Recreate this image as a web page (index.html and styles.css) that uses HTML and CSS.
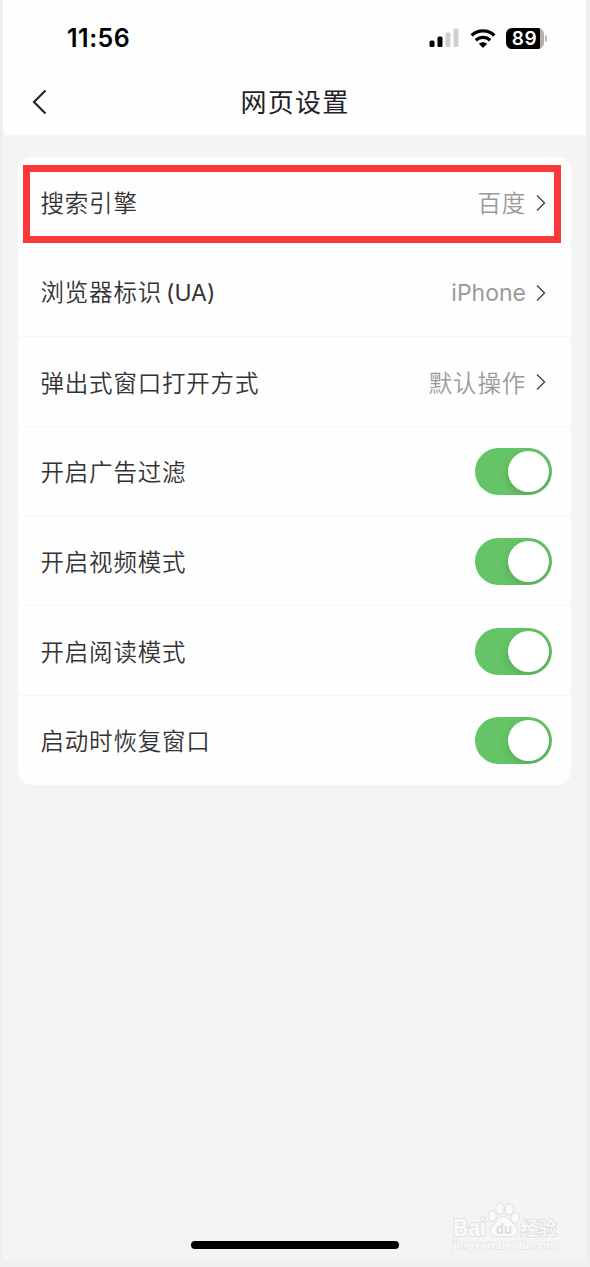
FILE: index.html
```html
<!DOCTYPE html>
<html lang="zh-CN">
<head>
    <meta charset="UTF-8">
    <title>网页设置</title>
    <link rel="stylesheet" href="styles.css">
</head>
<body>
    <div class="phone">
        <header class="header">
            <div class="status-bar">
                <span class="time">11:56</span>
                <div class="status-icons">
                    <svg class="signal" width="30" height="20" viewBox="0 0 30 20">
                        <rect x="0.5" y="12.5" width="5" height="6.5" rx="1.5"/>
                        <rect x="8.5" y="8.5" width="5" height="10.5" rx="1.5"/>
                        <rect class="dim" x="16.5" y="4.5" width="5" height="14.5" rx="1.5"/>
                        <rect class="dim" x="24.5" y="0.5" width="5" height="18.5" rx="1.5"/>
                    </svg>
                    <svg class="wifi" width="26" height="19" viewBox="0 0 26 19">
                        <path d="M1.7 6.5C8 .4 18 .4 24.3 6.5M5.8 11.2c4.1-3.9 10.3-3.9 14.4 0" fill="none" stroke="#000" stroke-width="3.3"/>
                        <path d="M13 19l-4.2-4.2c2.3-2.2 6.1-2.2 8.4 0z"/>
                    </svg>
                    <div class="battery"><span>89</span></div>
                    <div class="battery-cap"></div>
                </div>
            </div>
            <div class="nav-bar">
                <svg class="back" width="18" height="28" viewBox="0 0 18 28">
                    <path d="M15.5 2.5L4 14l11.5 11.5" fill="none" stroke="#24242a" stroke-width="2.2"/>
                </svg>
                <h1>网页设置</h1>
            </div>
        </header>

        <main class="card">
            <div class="row">
                <span class="label">搜索引擎</span>
                <span class="value">百度</span>
                <svg class="arrow" viewBox="0 0 10 18"><path d="M1 1.5L8.5 9 1 16.5"/></svg>
                <div class="highlight"></div>
            </div>
            <div class="row">
                <span class="label">浏览器标识<span class="latin">(UA)</span></span>
                <span class="value latin">iPhone</span>
                <svg class="arrow" viewBox="0 0 10 18"><path d="M1 1.5L8.5 9 1 16.5"/></svg>
            </div>
            <div class="row">
                <span class="label">弹出式窗口打开方式</span>
                <span class="value">默认操作</span>
                <svg class="arrow" viewBox="0 0 10 18"><path d="M1 1.5L8.5 9 1 16.5"/></svg>
            </div>
            <div class="row">
                <span class="label">开启广告过滤</span>
                <div class="switch"></div>
            </div>
            <div class="row">
                <span class="label">开启视频模式</span>
                <div class="switch"></div>
            </div>
            <div class="row">
                <span class="label">开启阅读模式</span>
                <div class="switch"></div>
            </div>
            <div class="row">
                <span class="label">启动时恢复窗口</span>
                <div class="switch"></div>
            </div>
        </main>

        <footer class="footer">
            <div class="home-bar"></div>
        </footer>

        <svg class="watermark" width="110" height="52" viewBox="0 0 110 52">
            <text class="wm-logo" x="3" y="32.5" textLength="33" lengthAdjust="spacingAndGlyphs">Bai</text>
            <g class="paw">
                <ellipse cx="42.2" cy="13" rx="3.7" ry="4.8" transform="rotate(-12 42.2 13)"/>
                <ellipse cx="50" cy="5.8" rx="3.7" ry="5"/>
                <ellipse cx="59.3" cy="6.3" rx="3.7" ry="5" transform="rotate(8 59.3 6.3)"/>
                <ellipse cx="65.2" cy="14.8" rx="3.7" ry="4.8" transform="rotate(14 65.2 14.8)"/>
                <path d="M54 14c-6 0-6 4.5-9.5 7.5-6 5-4 11.5 2.5 11.5h14c6.5 0 8.5-6.5 2.5-11.5-3.5-3-3.5-7.5-9.5-7.5z"/>
            </g>
            <text class="wm-du" x="46" y="31" textLength="16" lengthAdjust="spacingAndGlyphs">du</text>
            <text class="wm-cn" x="70.5" y="31.5" textLength="36">经验</text>
            <text class="wm-url" x="3" y="46" textLength="104" lengthAdjust="spacingAndGlyphs">jingyan.baidu.com</text>
        </svg>
    </div>
</body>
</html>
```
FILE: styles.css
```css
:root {
    --page-bg: #f4f4f4;
    --edge: #efefef;
    --white: #ffffff;
    --green: #65c466;
    --red: #fd3838;
    --text: #333333;
    --muted: #9a9a9a;
}

* {
    box-sizing: border-box;
}

body {
    margin: 0;
    background-color: var(--edge);
    font-family: "Noto Sans CJK SC", sans-serif;
    color: var(--text);
}

.phone {
    position: relative;
    display: flex;
    flex-direction: column;
    width: 583px;
    height: 1261px;
    margin-left: 3px;
    background-color: var(--page-bg);
}

.header {
    height: 135px;
    background-color: #fefefe;
}

.status-bar {
    display: flex;
    justify-content: space-between;
    align-items: center;
    height: 76px;
    padding: 0 39px 0 64px;
}

.time {
    font: 600 25px Inter, sans-serif;
    letter-spacing: 0.5px;
    color: #000;
}

.status-icons {
    display: flex;
    align-items: center;
}

.signal {
    margin-right: 11px;
}

.signal .dim {
    fill: #cfcfcf;
}

.battery {
    width: 38px;
    height: 21px;
    margin-left: 10px;
    padding-right: 1px;
    border-radius: 6px;
    background: linear-gradient(to right, #000 34px, #b0b0b0 34px);
    color: var(--white);
    font: 600 19px/21px Inter, sans-serif;
    letter-spacing: 0.6px;
    text-align: center;
}

.battery-cap {
    width: 2px;
    height: 7px;
    margin-left: 1px;
    border-radius: 0 3px 3px 0;
    background-color: #b8b8b8;
}

.nav-bar {
    display: grid;
    grid-template-columns: 64px 1fr 64px;
    align-items: center;
    height: 52px;
}

.back {
    margin-left: 27px;
}

h1 {
    margin: 0;
    padding: 0 0 2px 1px;
    font-size: 26px;
    font-weight: 400;
    line-height: 50px;
    letter-spacing: 1.3px;
    text-align: center;
    color: #1f1f28;
}

.card {
    width: 553px;
    margin: 22px 0 0 15px;
    border-radius: 14px;
    background-color: #fefefe;
}

.row {
    position: relative;
    display: flex;
    align-items: center;
    height: 89.7px;
    padding: 1px 19px 0 22.5px;
    border-top: 1px solid #f6f6f6;
    font-size: 23.5px;
    font-weight: 350;
    line-height: 34px;
    letter-spacing: 0.8px;
}

.row:first-child {
    border-top-color: transparent;
}

.label {
    flex: 1;
    padding-bottom: 1px;
}

.value {
    padding-bottom: 1px;
    color: var(--muted);
}

.latin {
    font-family: Inter, sans-serif;
    font-size: 23px;
    font-weight: 400;
    letter-spacing: 0;
}

.label .latin {
    margin-left: 4px;
}

.value.latin {
    padding-bottom: 0;
}

.arrow {
    width: 10px;
    height: 18px;
    margin: 0 6px 0 10px;
    fill: none;
    stroke: #444;
    stroke-width: 1.4;
}

.highlight {
    position: absolute;
    top: 7px;
    left: 5px;
    width: 538px;
    height: 78px;
    border: 7px solid var(--red);
}

.switch {
    display: flex;
    justify-content: flex-end;
    align-items: center;
    width: 77px;
    height: 47px;
    padding-right: 3px;
    border-radius: 24px;
    background-color: var(--green);
    overflow: hidden;
}

.switch::before {
    content: "";
    width: 41px;
    height: 41px;
    border-radius: 50%;
    background-color: var(--white);
    box-shadow: 0 3px 8px rgba(0, 0, 0, 0.15);
}

.footer {
    display: flex;
    justify-content: center;
    margin-top: auto;
    padding-bottom: 12px;
}

.home-bar {
    width: 208px;
    height: 8px;
    border-radius: 4px;
    background-color: #000;
}

.watermark {
    position: absolute;
    right: 26px;
    bottom: 6px;
    overflow: visible;
    fill: #fafafa;
    stroke: #e0e0e0;
    stroke-width: 2px;
    paint-order: stroke;
    font-family: "Liberation Sans", sans-serif;
    font-weight: 700;
}

.wm-logo {
    font-size: 23px;
}

.wm-du {
    font-size: 15px;
    fill: #dcdcdc;
    stroke: none;
}

.wm-cn {
    font-family: "Noto Sans CJK SC", sans-serif;
    font-size: 18px;
    font-weight: 500;
}

.wm-url {
    font-size: 11px;
    stroke: #e9e9e9;
}
```
